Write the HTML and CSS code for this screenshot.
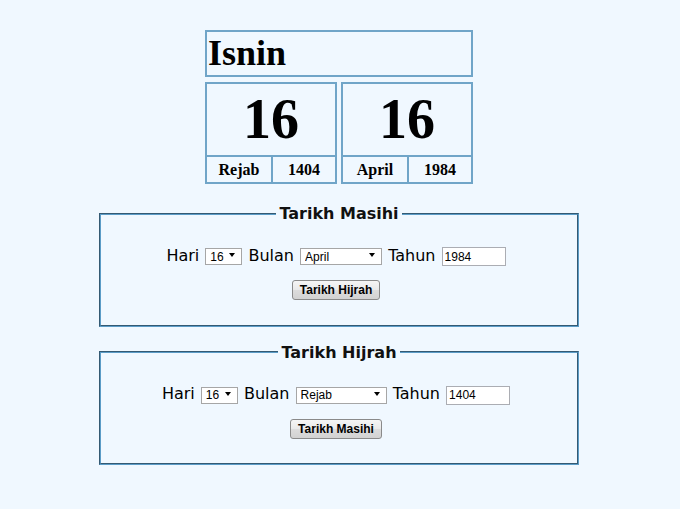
FILE: index.html
```html
<!DOCTYPE html>
<html lang="ms">
<head>
<meta charset="utf-8">
<title>Tarikh</title>
<link rel="stylesheet" href="styles.css">
</head>
<body>
<div class="page">
  <div class="cal">
    <div class="dayname">Isnin</div>
    <div class="dates">
      <div class="datebox">
        <div class="big">16</div>
        <div class="meta"><span>Rejab</span><span>1404</span></div>
      </div>
      <div class="datebox">
        <div class="big">16</div>
        <div class="meta"><span>April</span><span>1984</span></div>
      </div>
    </div>
  </div>

  <fieldset class="box">
    <legend>Tarikh Masihi</legend>
    <div class="row">Hari <span class="sel"><select class="s-day"><option>16</option></select></span> Bulan <span class="sel"><select class="s-m1"><option>April</option></select></span> Tahun <input class="year" type="text" value="1984"></div>
    <div class="actions"><button type="button" class="btn">Tarikh Hijrah</button></div>
  </fieldset>

  <fieldset class="box box2">
    <legend>Tarikh Hijrah</legend>
    <div class="row">Hari <span class="sel"><select class="s-day"><option>16</option></select></span> Bulan <span class="sel"><select class="s-m2"><option>Rejab</option></select></span> Tahun <input class="year" type="text" value="1404"></div>
    <div class="actions"><button type="button" class="btn">Tarikh Masihi</button></div>
  </fieldset>
</div>
</body>
</html>
```

FILE: styles.css
```css
html, body {
  margin: 0;
  background: #f0f8ff;
}

body {
  font-family: "DejaVu Sans", Verdana, sans-serif;
  color: #000;
}

.page {
  width: 678px;
  padding-top: 30px;
  display: flex;
  flex-direction: column;
  align-items: center;
}

/* calendar display */
.cal {
  width: 268px;
  font-family: "Liberation Serif", "Times New Roman", serif;
  font-weight: bold;
}

.dayname {
  box-sizing: border-box;
  height: 47px;
  border: 2px solid #70a5c8;
  font-size: 36px;
  line-height: 43px;
  padding-left: 1px;
}

.dates {
  display: flex;
  gap: 4px;
  margin-top: 5px;
}

.datebox {
  flex: 1;
  box-sizing: border-box;
  height: 102px;
  border: 2px solid #70a5c8;
}

.big {
  height: 71px;
  font-size: 56px;
  line-height: 71px;
  text-align: center;
  border-bottom: 2px solid #70a5c8;
}

.meta {
  display: grid;
  grid-template-columns: 1fr 1fr;
  height: 25px;
  font-size: 16px;
  line-height: 25px;
  text-align: center;
}

.meta span + span {
  border-left: 2px solid #70a5c8;
}

/* forms */
.box {
  box-sizing: border-box;
  width: 480px;
  margin: 20px 0 0;
  padding: 22.5px 0 24.5px;
  border: 2px groove #5b9cc7;
  min-width: 0;
}

.box2 {
  margin-top: 16px;
}

.box legend {
  margin: 0 auto;
  padding: 0 3px;
  font-size: 16px;
  font-weight: bold;
  color: #111;
}

.row {
  padding-right: 6px;
  text-align: center;
  font-size: 16px;
}

.sel {
  position: relative;
  display: inline-block;
  margin: 0 1px;
}

.sel::after {
  content: "";
  position: absolute;
  right: 7px;
  top: 50%;
  margin-top: -2px;
  border-left: 3px solid transparent;
  border-right: 3px solid transparent;
  border-top: 4px solid #000;
  pointer-events: none;
}

.sel select {
  -webkit-appearance: none;
  appearance: none;
  box-sizing: border-box;
  height: 17px;
  margin: 0;
  padding: 0 0 0 4px;
  border: 1px solid #a6a6a6;
  border-radius: 0;
  background: #fff;
  color: #000;
  font-family: "Liberation Sans", Arial, sans-serif;
  font-size: 12px;
}

.s-day { width: 37px; }
.s-m1 { width: 82px; }
.s-m2 { width: 91px; }

.year {
  box-sizing: border-box;
  width: 64px;
  height: 19px;
  margin: 0 0 0 1px;
  padding: 0 2px;
  border: 1px solid #abadb3;
  background: #fff;
  color: #000;
  font-family: "Liberation Sans", Arial, sans-serif;
  font-size: 12px;
}

.actions {
  padding-right: 6px;
  margin-top: 13px;
  text-align: center;
}

.btn {
  box-sizing: border-box;
  height: 20px;
  margin: 0;
  padding: 0 7px;
  border: 1px solid #8a8a8a;
  border-radius: 3px;
  background: linear-gradient(#f5f5f5, #e9e9e9 50%, #dcdcdc 51%, #d2d2d2);
  color: #000;
  font-family: "Liberation Sans", Arial, sans-serif;
  font-size: 12px;
  font-weight: bold;
}
```
